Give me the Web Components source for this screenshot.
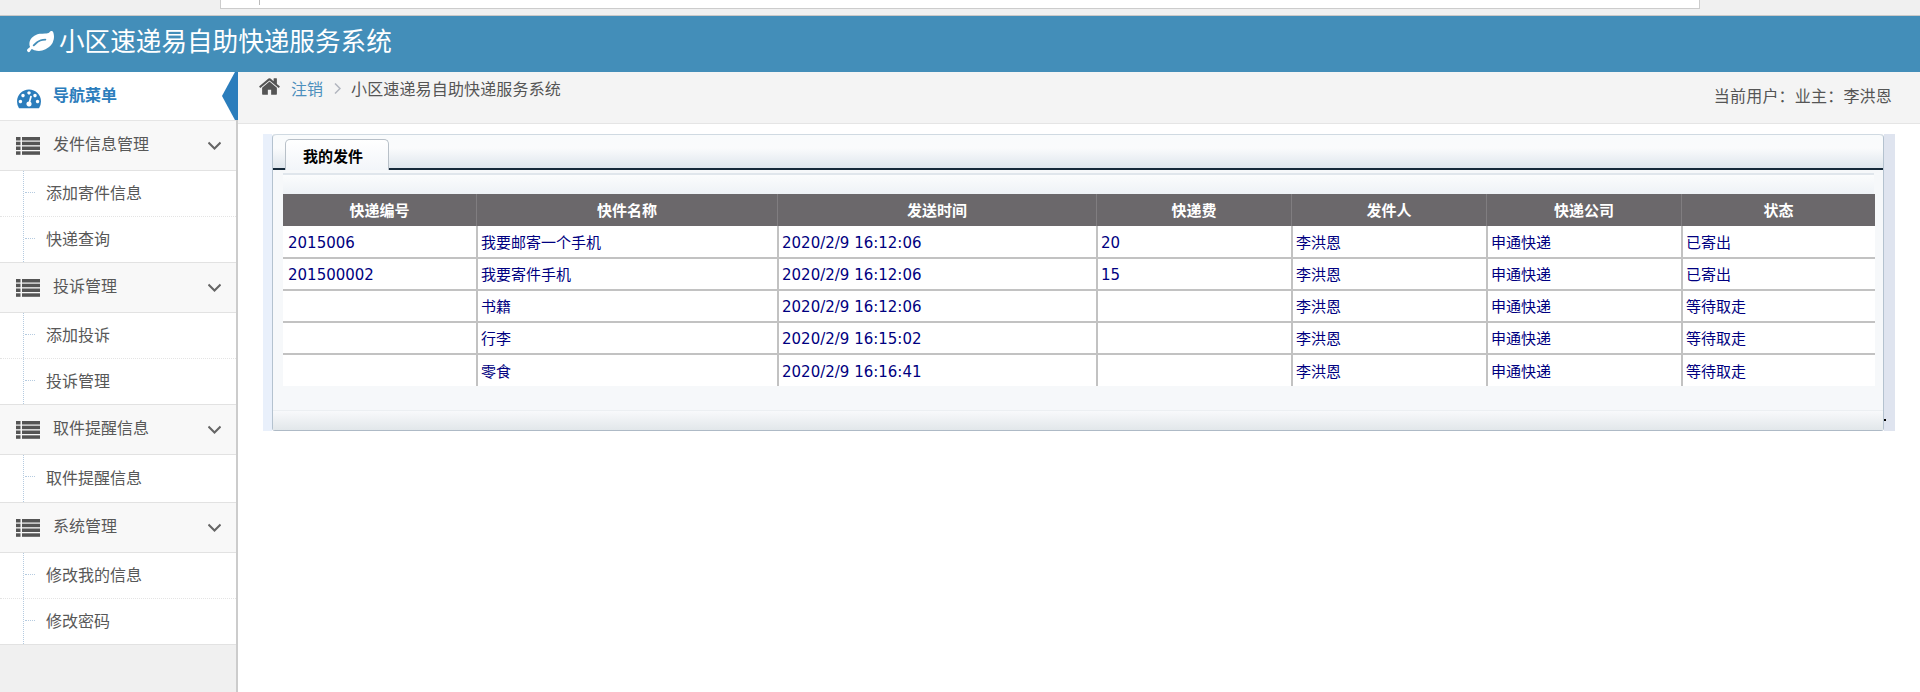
<!DOCTYPE html>
<html lang="zh">
<head>
<meta charset="utf-8">
<title>小区速递易自助快递服务系统</title>
<style>
  html, body { margin: 0; height: 100%; background: #fff; }
  body { font-family: "Noto Sans CJK SC", sans-serif; overflow: hidden; }
  page-shell { height: 692px; }
</style>
</head>
<body>
<template id="t-shell">
  <style>
    :host { display: grid; grid-template-rows: 16px 56px 1fr; grid-template-columns: 238px 1fr; }
    .top, .head { grid-column: 1 / 3; }
    .side { grid-row: 3; grid-column: 1; position: relative; z-index: 1; }
    .main { grid-row: 3; grid-column: 2; min-width: 0; }
  </style>
  <div class="top"><slot name="top"></slot></div>
  <div class="head"><slot name="head"></slot></div>
  <div class="side"><slot name="side"></slot></div>
  <div class="main"><slot></slot></div>
</template>

<page-shell>
  <browser-strip slot="top"></browser-strip>
  <app-header slot="head">小区速递易自助快递服务系统</app-header>
  <side-nav slot="side">
    <nav-group label="发件信息管理">
      <nav-item>添加寄件信息</nav-item>
      <nav-item>快递查询</nav-item>
    </nav-group>
    <nav-group label="投诉管理">
      <nav-item>添加投诉</nav-item>
      <nav-item>投诉管理</nav-item>
    </nav-group>
    <nav-group label="取件提醒信息">
      <nav-item>取件提醒信息</nav-item>
    </nav-group>
    <nav-group label="系统管理">
      <nav-item>修改我的信息</nav-item>
      <nav-item>修改密码</nav-item>
    </nav-group>
  </side-nav>
  <bread-bar user="当前用户：业主：李洪恩"></bread-bar>
  <tab-frame label="我的发件"><parcel-table></parcel-table></tab-frame>
</page-shell>

<script>
function makeRoot(el, html) {
  el.attachShadow({mode: "open"}).innerHTML = html;
}

class PageShell extends HTMLElement {
  constructor() {
    super();
    this.attachShadow({mode: "open"}).appendChild(document.getElementById("t-shell").content.cloneNode(true));
  }
}

class BrowserStrip extends HTMLElement {
  constructor() {
    super();
    makeRoot(this, `
      <style>
        :host { display: block; height: 16px; box-sizing: border-box; background: #f0f0f0; border-bottom: 1px solid #c9c9c9; padding-left: 220px; padding-right: 220px; }
        .box { height: 9px; box-sizing: border-box; background: #fff; border: 1px solid #ccc; border-top: 0; padding-left: 38px; }
        .box i { display: block; width: 1px; height: 5px; background: #bbb; }
      </style>
      <div class="box"><i></i></div>`);
  }
}

class AppHeader extends HTMLElement {
  constructor() {
    super();
    makeRoot(this, `
      <style>
        :host { display: flex; align-items: center; height: 56px; background: #438eb9; color: #fff; padding-left: 27px; padding-bottom: 9px; box-sizing: border-box; font-size: 25.6px; gap: 5px; }
        svg { width: 27px; height: 27px; fill: #fff; margin-top: 6px; }
      </style>
      <svg viewBox="0 0 1792 1792"><path d="M1280 704q0-26-19-45t-45-19q-172 0-318 49.500t-259.500 134-235.500 219.500q-19 21-19 45 0 26 19 45t45 19q24 0 45-19 27-24 74-71t67-66q137-124 268.500-176t313.500-52q26 0 45-19t19-45zm512-198q0 95-20 193-46 224-184.500 383t-357.500 268q-214 108-438 108-148 0-286-47-15-5-88-42t-96-37q-16 0-39.500 32t-45 70-52.500 70-60 32q-30 0-51-11t-31-24-27-42q-2-4-6-11t-5.500-10-3-9.500-1.500-13.500q0-35 31-73.500t68-65.500 68-56 31-48q0-4-14-38t-16-44q-9-51-9-104 0-115 43.500-220t119-184.500 170.500-139 204-95.500q55-18 145-25.500t179.500-9 178.500-6 163.500-24 113.500-56.500l29.500-29.500 29.500-28 27-20 36.500-16 43.500-4.500q39 0 70.500 46t47.500 112 24 124 8 96z"/></svg>
      <span><slot></slot></span>`);
  }
}

class SideNav extends HTMLElement {
  constructor() {
    super();
    makeRoot(this, `
      <style>
        :host { display: block; height: 100%; box-sizing: border-box; background: #f0f0f0; border-right: 2px solid #ccc; font-size: 16px; color: #585858; }
        .title { position: relative; display: flex; align-items: center; height: 48px; background: #fff; color: #2b7dbc; font-weight: 700; border-bottom: 1px solid #e5e5e5; padding-left: 17px; gap: 12px; box-sizing: content-box; }
        .title svg { width: 24px; height: 24px; fill: #2b7dbc; margin-top: 3px; }
        .title:after { content: ""; position: absolute; right: -2px; top: 0; width: 16px; height: 48px; background: #2b7dbc; clip-path: polygon(100% 0, 100% 100%, 81% 100%, 0 50%, 81% 0); }
        .title b { margin-top: -4px; font-weight: 700; }
      </style>
      <div class="title">
        <svg viewBox="0 0 1792 1792"><path d="M384 1152q0-53-37.500-90.500t-90.500-37.500-90.500 37.500-37.500 90.500 37.500 90.500 90.500 37.500 90.500-37.500 37.500-90.500zm192-448q0-53-37.500-90.500t-90.500-37.500-90.500 37.500-37.500 90.500 37.500 90.500 90.500 37.500 90.500-37.500 37.500-90.500zm428 481l101-382q6-26-7.500-48.500t-38.500-29.500-48 6.500-30 39.500l-101 382q-60 5-107 43.500t-63 98.500q-20 77 20 146t117 89 146-20 89-117q16-60-6-117t-72-91zm660-33q0-53-37.500-90.500t-90.500-37.500-90.500 37.500-37.500 90.500 37.500 90.500 90.500 37.500 90.500-37.500 37.500-90.500zm-640-640q0-53-37.500-90.500t-90.500-37.500-90.500 37.500-37.500 90.500 37.500 90.500 90.500 37.500 90.500-37.500 37.500-90.500zm448 192q0-53-37.500-90.500t-90.500-37.500-90.500 37.500-37.500 90.500 37.500 90.500 90.500 37.500 90.500-37.500 37.500-90.500zm320 448q0 261-141 483-19 29-54 29h-1402q-35 0-54-29-141-221-141-483 0-182 71-348t191-286 286-191 348-71 348 71 286 191 191 286 71 348z"/></svg>
        <b>导航菜单</b>
      </div>
      <slot></slot>`);
  }
}

class NavGroup extends HTMLElement {
  constructor() {
    super();
    makeRoot(this, `
      <style>
        :host { display: block; background: #fff; border-bottom: 1px solid #e2e2e2; }
        .hd { display: flex; align-items: center; height: 49px; background: #f8f8f8; border-bottom: 1px solid #e2e2e2; padding-left: 16px; padding-right: 15px; }
        .list { width: 24px; height: 18px; fill: #555; margin-right: 13px; }
        .lbl { flex: 1; margin-top: -5px; }
        .chev { width: 13px; height: 10px; fill: none; stroke: #666; stroke-width: 2; }
      </style>
      <div class="hd">
        <svg class="list" viewBox="0 0 24 18">
          <g><rect x="0" y="0" width="4.500" height="3.500"/><rect x="0" y="4.700" width="4.500" height="3.500"/><rect x="0" y="9.500" width="4.500" height="3.500"/><rect x="0" y="14.300" width="4.500" height="3.500"/>
          <rect x="6" y="0" width="18" height="3.500"/><rect x="6" y="4.700" width="18" height="3.500"/><rect x="6" y="9.500" width="18" height="3.500"/><rect x="6" y="14.300" width="18" height="3.500"/></g>
        </svg>
        <span class="lbl"></span>
        <svg class="chev" viewBox="0 0 13 10"><polyline points="0.500,1.500 6.500,7.500 12.500,1.500"/></svg>
      </div>
      <slot></slot>`);
    this.shadowRoot.querySelector(".lbl").textContent = this.getAttribute("label");
  }
}

class NavItem extends HTMLElement {
  constructor() {
    super();
    makeRoot(this, `
      <style>
        :host { display: flex; align-items: center; height: 46px; padding-left: 46px; box-sizing: border-box; position: relative; border-bottom: 1px dotted #e4e4e4; }
        :host(:last-child) { border-bottom: 0; height: 45px; }
        :host(:only-child) { height: 47px; }
        span { margin-top: -3px; }
        .v { position: absolute; left: 23px; top: 0; bottom: 0; border-left: 1px dotted #b5cbe0; }
        .h { position: absolute; left: 25px; width: 10px; top: 21px; border-top: 1px dotted #b5cbe0; }
      </style>
      <i class="v"></i><i class="h"></i><span><slot></slot></span>`);
  }
}

class BreadBar extends HTMLElement {
  constructor() {
    super();
    makeRoot(this, `
      <style>
        :host { display: flex; height: 52px; box-sizing: border-box; padding: 0 28px 0 20px; background: #f4f4f4; border-bottom: 1px solid #e5e5e5; font-size: 16px; color: #555; }
        .crumbs { display: flex; align-items: center; height: 31px; flex: 1; }
        .home { width: 23px; height: 23px; fill: #555; margin-right: 10px; margin-top: -3px; }
        a { color: #4c8fbd; text-decoration: none; }
        .sep { width: 7px; height: 11px; fill: none; stroke: #b2b6bf; stroke-width: 1.500; margin: 2px 10px 0 11px; }
        .crumbs span { letter-spacing: .15px; }
        .user { padding-top: 11px; line-height: 24px; letter-spacing: .2px; }
      </style>
      <div class="crumbs">
        <svg class="home" viewBox="0 0 1792 1792"><path d="M1472 992v480q0 26-19 45t-45 19h-384v-384h-256v384h-384q-26 0-45-19t-19-45v-480q0-1 .5-3t.5-3l575-474 575 474q1 2 1 6zm223-69l-62 74q-8 9-21 11h-3q-13 0-21-7l-692-577-692 577q-12 8-24 7-13-2-21-11l-62-74q-8-10-7-23.500t11-21.500l719-599q32-26 76-26t76 26l244 204v-195q0-14 9-23t23-9h192q14 0 23 9t9 23v408l219 182q10 8 11 21.500t-7 23.500z"/></svg>
        <a href="#">注销</a>
        <svg class="sep" viewBox="0 0 7 11"><polyline points="1,0.500 6,5.500 1,10.500"/></svg>
        <span>小区速递易自助快递服务系统</span>
      </div>
      <div class="user"></div>`);
    this.shadowRoot.querySelector(".user").textContent = this.getAttribute("user");
  }
}

class TabFrame extends HTMLElement {
  constructor() {
    super();
    makeRoot(this, `
      <style>
        :host { display: block; margin: 10px 25px 0; position: relative; height: 297px; box-sizing: border-box; padding-left: 9px; padding-right: 11px; background: linear-gradient(90deg, #e9f0fb 0 9px, transparent 9px), linear-gradient(270deg, #dfe4ef 0 11px, transparent 11px); }
        .win { height: 100%; box-sizing: border-box; border-left: 1px solid #b4c2cf; border-right: 1px solid #b4c2cf; border-bottom: 1px solid #aebac6; border-radius: 4px 4px 3px 3px; background: #f6f8fa; display: flex; flex-direction: column; }
        .bar { height: 36px; box-sizing: border-box; display: flex; align-items: flex-end; padding-left: 12px; background: linear-gradient(#f9fbfc 0, #fafbfc 40%, #dfe6ed 100%); border-top: 1px solid #d0dae2; border-bottom: 2px solid #16293a; border-radius: 4px 4px 0 0; flex: none; }
        .tab { width: 104px; height: 31px; margin-bottom: -2px; box-sizing: border-box; padding-left: 17px; border: 1px solid #b8c0c8; border-bottom: 0; border-radius: 5px 5px 0 0; background: linear-gradient(#fff, #f2f5f9); color: #000; font-size: 15px; font-weight: 700; display: flex; align-items: center; }
        .strip { height: 21px; box-sizing: border-box; margin: 3px 9px 0 10px; border-top: 2px solid #e0e6ec; background: linear-gradient(#fbfcfd, #eef2f6); flex: none; }
        .body { padding: 0 9px 0 10px; flex: none; }
        .foot { flex: 1; display: flex; flex-direction: column; background: #f6f8fa; }
        .foot div:first-child { height: 25px; border-bottom: 1px solid #eceff2; box-sizing: border-box; }
        .foot div:last-child { flex: 1; background: linear-gradient(#f8f9fb, #e2e7ea); }
        .dot { position: absolute; right: 9px; top: 285px; width: 2px; height: 2px; background: #000; }
      </style>
      <div class="win">
        <div class="bar"><div class="tab"></div></div>
        <div class="strip"></div>
        <div class="body"><slot></slot></div>
        <div class="foot"><div></div><div></div></div>
      </div>
      <i class="dot"></i>`);
    this.shadowRoot.querySelector(".tab").textContent = this.getAttribute("label");
  }
}

class ParcelTable extends HTMLElement {
  constructor() {
    super();
    const cols = ["快递编号", "快件名称", "发送时间", "快递费", "发件人", "快递公司", "状态"];
    const rows = [
      ["2015006", "我要邮寄一个手机", "2020/2/9 16:12:06", "20", "李洪恩", "申通快递", "已寄出"],
      ["201500002", "我要寄件手机", "2020/2/9 16:12:06", "15", "李洪恩", "申通快递", "已寄出"],
      ["", "书籍", "2020/2/9 16:12:06", "", "李洪恩", "申通快递", "等待取走"],
      ["", "行李", "2020/2/9 16:15:02", "", "李洪恩", "申通快递", "等待取走"],
      ["", "零食", "2020/2/9 16:16:41", "", "李洪恩", "申通快递", "等待取走"]
    ];
    const widths = [193, 301, 319, 195, 195, 195, 194];
    makeRoot(this, `
      <style>
        :host { display: block; font-family: "DejaVu Sans", "Noto Sans CJK SC", sans-serif; font-size: 15px; }
        table { width: 1592px; table-layout: fixed; border-collapse: separate; border-spacing: 0; background: #fff; }
        th { height: 32px; padding: 0 0 1px; box-sizing: border-box; background: #6b686b; color: #fff; font-weight: 700; font-family: "Noto Sans CJK SC", sans-serif; border-left: 1px solid #807d80; }
        th:first-child, td:first-child { border-left: 0; }
        td { height: 32px; box-sizing: border-box; padding: 2px 0 0 3px; line-height: 20px; color: #000080; border-left: 2px solid #c2c2c2; border-top: 2px solid #c2c2c2; white-space: nowrap; }
        td:first-child { padding-left: 5px; }
        tr:first-child td { border-top: 0; height: 31px; }
        tr:last-child td { height: 33px; }
      </style>
      <table>
        <colgroup>${widths.map(w => `<col style="width:${w}px">`).join("")}</colgroup>
        <thead><tr>${cols.map(c => `<th>${c}</th>`).join("")}</tr></thead>
        <tbody>${rows.map(r => `<tr>${r.map(c => `<td>${c}</td>`).join("")}</tr>`).join("")}</tbody>
      </table>`);
  }
}

customElements.define("page-shell", PageShell);
customElements.define("browser-strip", BrowserStrip);
customElements.define("app-header", AppHeader);
customElements.define("side-nav", SideNav);
customElements.define("nav-group", NavGroup);
customElements.define("nav-item", NavItem);
customElements.define("bread-bar", BreadBar);
customElements.define("tab-frame", TabFrame);
customElements.define("parcel-table", ParcelTable);
</script>
</body>
</html>
